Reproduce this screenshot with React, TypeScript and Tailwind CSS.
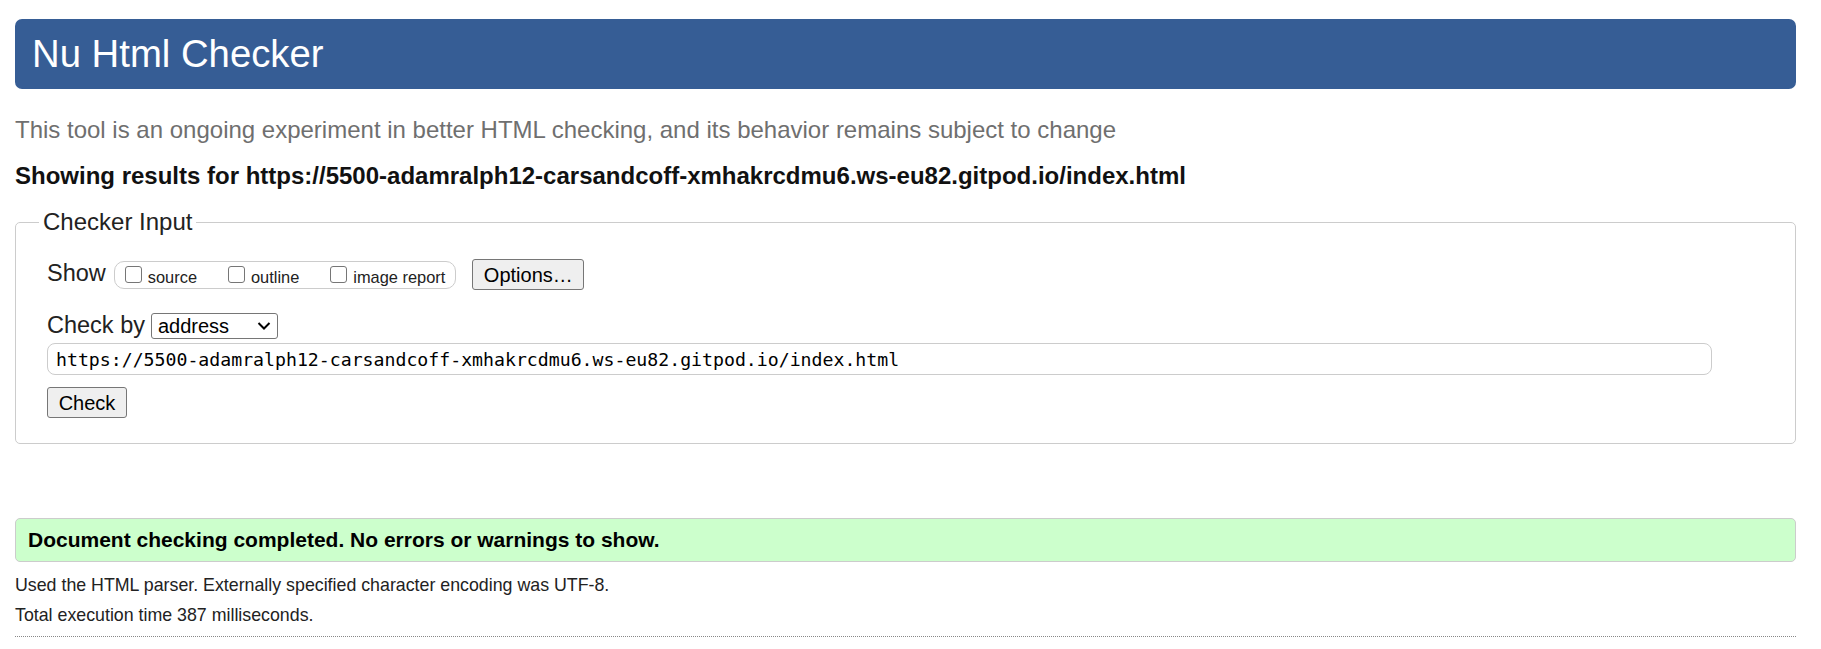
import React from "react";

const sans = "font-['Liberation_Sans',Arial,sans-serif]";

function Box({ label }: { label: string }) {
  return (
    <label className="flex items-center">
      <input
        type="checkbox"
        className="appearance-none w-[17px] h-[17px] border border-[#767676] rounded-[3px] bg-white m-0"
      />
      <span className="ml-[6px] text-[16.4px] text-[#222] leading-[20px] translate-y-[2px]">{label}</span>
    </label>
  );
}

export default function App() {
  return (
    <div className={`${sans} bg-white min-h-[649px] pl-[15px] pr-[25px] pt-[19px] text-[#222]`}>
      {/* header */}
      <header className="h-[70px] rounded-[7px] bg-[#365d95] flex items-center pl-[17px]">
        <h1 className="text-[38.3px] leading-none text-white font-normal">Nu Html Checker</h1>
      </header>

      <p className="mt-[26px] h-[30px] leading-[30px] text-[24px] text-[#6f6f6f]">
        This tool is an ongoing experiment in better HTML checking, and its behavior remains subject to change
      </p>
      <p className="mt-[16px] h-[30px] leading-[30px] text-[24px] font-bold text-[#111]">
        Showing results for https://5500-adamralph12-carsandcoff-xmhakrcdmu6.ws-eu82.gitpod.io/index.html
      </p>

      {/* Checker Input */}
      <fieldset className="mt-[16px] border border-[#ccc] rounded-[5px] pl-[8px] pr-[20px] pb-[24.5px]">
        <legend className="ml-[15px] px-[4px] text-[24px] leading-[30px] text-[#222]">Checker Input</legend>

        <div className="pl-[23px]">
          <div className="flex items-center h-[31px] mt-[22px]">
            <span className="text-[23.5px] leading-[30px] -translate-y-[2px]">Show</span>
            <div className="ml-[8px] h-[28px] border border-[#ccc] rounded-[10px] flex items-center pl-[10px] pr-[10px] gap-[31px]">
              <Box label="source" />
              <Box label="outline" />
              <Box label="image report" />
            </div>
            <button className="ml-[16px] h-[31px] w-[112px] bg-[#efefef] border border-[#767676] rounded-[3px] text-[20px] text-black leading-none">
              Options…
            </button>
          </div>

          <div className="flex items-center h-[26px] mt-[23px]">
            <span className="text-[23.5px] leading-[30px] -translate-y-[1px]">Check by</span>
            <div className="relative ml-[6px]">
              <select className="appearance-none h-[26px] w-[127px] border border-[#767676] rounded-[3px] bg-white pl-[6px] text-[20px] leading-none text-black">
                <option>address</option>
              </select>
              <svg className="absolute right-[7px] top-[8px] pointer-events-none" width="14" height="10" viewBox="0 0 14 10">
                <path d="M1.5 2 L7 7.5 L12.5 2" fill="none" stroke="#000" strokeWidth="2" />
              </svg>
            </div>
          </div>

          <input
            readOnly
            value="https://5500-adamralph12-carsandcoff-xmhakrcdmu6.ws-eu82.gitpod.io/index.html"
            className="block mt-[4px] h-[32px] w-[1665px] border border-[#ccc] rounded-[8px] pl-[8px] font-['DejaVu_Sans_Mono',monospace] text-[18.2px] text-black outline-none"
          />

          <button className="block mt-[12px] h-[31px] w-[80px] bg-[#efefef] border border-[#767676] rounded-[3px] text-[20px] text-black leading-none">
            Check
          </button>
        </div>
      </fieldset>

      {/* result */}
      <div className="mt-[74px] h-[44px] border border-[#ccc] rounded-[5px] bg-[#ccffcc] flex items-center pl-[12px]">
        <p className="text-[21px] font-bold text-black">Document checking completed. No errors or warnings to show.</p>
      </div>

      <p className="mt-[11px] h-[24px] leading-[24px] text-[17.8px]">
        Used the HTML parser. Externally specified character encoding was UTF-8.
      </p>
      <p className="mt-[6px] h-[24px] leading-[24px] text-[17.8px]">Total execution time 387 milliseconds.</p>

      <hr className="mt-[9px] border-0 border-t border-dotted border-[#888]" />
    </div>
  );
}
